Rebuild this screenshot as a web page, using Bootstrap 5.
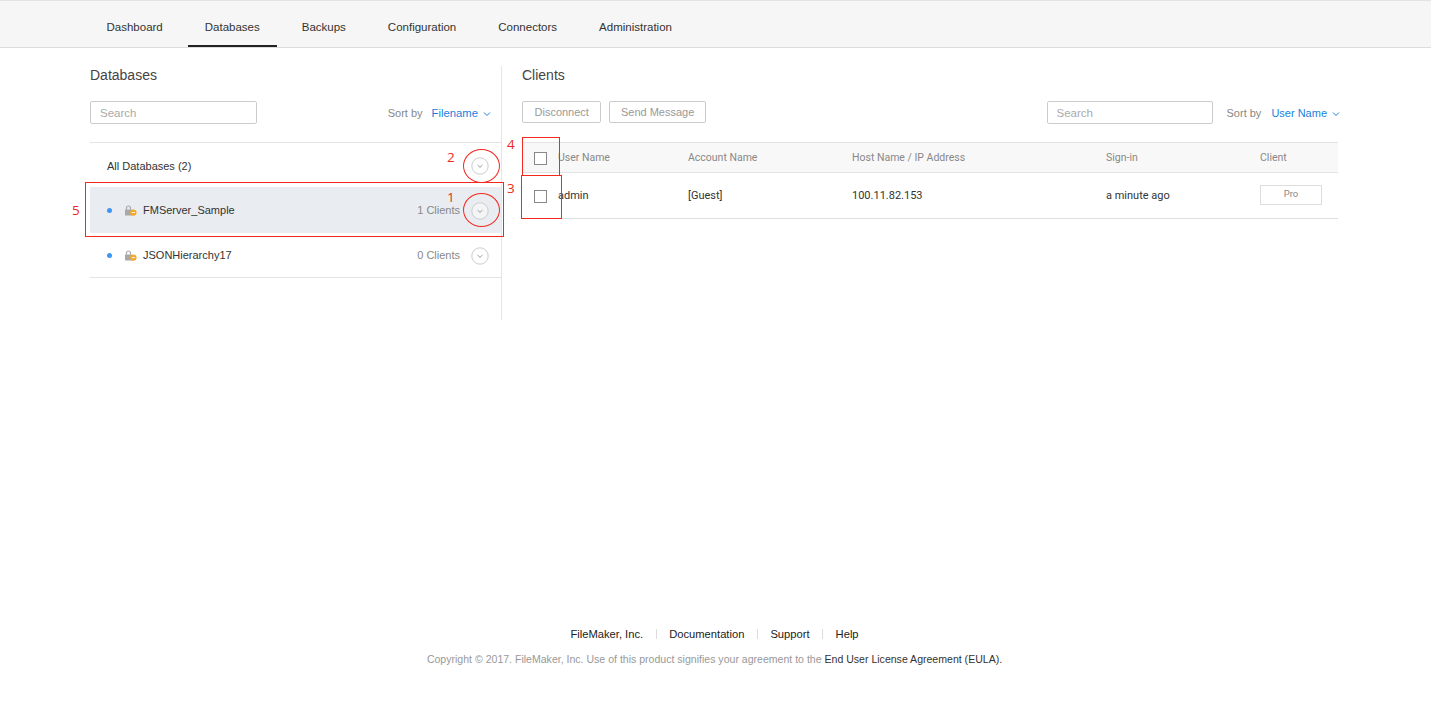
<!DOCTYPE html>
<html lang="en"><head><meta charset="utf-8"><title>Databases</title>
<link href="https://cdn.jsdelivr.net/npm/bootstrap@5.3.0/dist/css/bootstrap.min.css" rel="stylesheet">
<style>
html,body{height:100%}
body{font-family:"Liberation Sans",Arial,sans-serif;font-size:11px;color:#333;background:#fff;position:relative;overflow:hidden}
.topbar{height:48px;background:#f6f6f6;border-top:1px solid #e3e3e3;border-bottom:1px solid #ddd;padding-left:89.5px;gap:8px}
.topbar .nav-link{height:46px;padding:0 17px;color:#333;font-size:11.5px;line-height:53px;position:relative}
.topbar .nav-link.active::after{content:"";position:absolute;left:0;right:0;bottom:0;height:2px;background:#222}
.wrap{padding:18px 93px 0 90px}
.leftcol{width:412px;height:254px;border-right:1px solid #e6e6e6;flex:none}
.rightcol{margin-left:20px;flex:1;min-width:0}
.ttl{font-size:14px;line-height:18px;color:#444;font-weight:400;margin:0}
.sbox{width:167px;height:23px;border:1px solid #ccc;border-radius:2px;font-size:11.5px;padding:2px 9px 0;color:#333;font-family:inherit;background:#fff}
.sbox::placeholder{color:#aaa}
.sortlbl{color:#888;margin-right:9px;margin-top:2px}
.sortval{color:#1a7fdc;text-decoration:none;font-size:11.3px;margin-top:2px}
.chev{width:8px;height:6px;margin-left:5px}
.tools{height:24px;margin-top:16px}
.lefttools{padding-right:10px}
.righttools{margin-right:-2px}
.righttools .sbox{width:166px}
.righttools .sortlbl{margin-left:14px;margin-right:10px}
.righttools .sortval{font-size:11px}
.dbhead{height:45px;margin-top:18px;border-top:1px solid #e3e3e3;padding:2px 12px 0 17px}
.dbrow{height:45px;padding:1px 12px 0 17px;color:#333}
.dbrow.sel{background:#e9edf1;height:46px}
.dbrow.last{border-bottom:1px solid #e3e3e3}
.bdot{width:5px;height:5px;border-radius:50%;background:#3d96f5;margin-right:12px;flex:none}
.lockic{width:13px;height:11px;margin-right:6px;flex:none}
.cnt{color:#888;margin-left:auto;margin-right:11px}
.rbtn{width:18px;height:18px;flex:none}
.act{height:22px;border:1px solid #ccc;border-radius:2px;background:#fff;color:#999;font-size:11px;padding:0 11.5px;margin-right:8px;line-height:20px}
.act.wide{padding:0 10.5px}
.thd{height:31px;margin-top:18px;padding-top:2px;background:#f8f8f8;border-top:1px solid #e3e3e3;border-bottom:1px solid #e3e3e3;color:#888;font-family:Roboto,sans-serif;font-size:10.5px;line-height:1}
.trw{height:46px;padding-top:2px;border-bottom:1px solid #ddd;font-family:Roboto,sans-serif;font-size:11px;color:#333}
.cb{width:13px;height:13px;border:1px solid #888;background:#fff;flex:none;margin:0 11px 0 12px}
.c1{width:130px}.c2{width:164px}.c3{width:254px}.c4{width:154px}
.clnt{width:62px;height:20px;border:1px solid #ddd;color:#888;font-size:9.5px;display:flex;align-items:center;justify-content:center;margin-bottom:4px}
.ftr{position:absolute;left:0;right:0;top:627px;text-align:center;padding-right:2px}
.flinks{color:#222;font-size:11.2px;line-height:14px}
.flinks i{display:inline-block;width:1px;height:10px;background:#ddd;margin:0 12.5px;vertical-align:-1px}
.fcopy{color:#999;font-size:10.55px;line-height:14px;margin-top:11px}
.fcopy span{color:#333}
.note{position:absolute;border:1px solid #f4281f;pointer-events:none}
.circ{border-radius:50%}
.num{position:absolute;color:#ee2a20;font-family:"Open Sans",sans-serif;font-size:13.5px;line-height:16px}
</style></head><body>
<nav class="nav topbar">
<a class="nav-link" href="#">Dashboard</a><a class="nav-link active" href="#">Databases</a><a class="nav-link" href="#">Backups</a><a class="nav-link" href="#">Configuration</a><a class="nav-link" href="#">Connectors</a><a class="nav-link" href="#">Administration</a>
</nav>
<main class="wrap d-flex">
<section class="leftcol">
<h2 class="ttl">Databases</h2>
<div class="tools lefttools d-flex align-items-center">
<input class="sbox" placeholder="Search">
<span class="sortlbl ms-auto">Sort by</span><a class="sortval" href="#">Filename<svg class="chev" viewBox="0 0 8 6"><path d="M1 1.5l3 3 3-3" fill="none" stroke="#1a7fdc"/></svg></a>
</div>
<div class="dbhead d-flex align-items-center"><span>All Databases (2)</span><svg class="rbtn ms-auto" viewBox="0 0 18 18"><circle cx="9" cy="9" r="8.2" fill="#fff" stroke="#ccc"/><path d="M6.5 8l2.5 2.4L11.5 8" fill="none" stroke="#999"/></svg></div>
<div class="dbrow sel d-flex align-items-center"><span class="bdot"></span><svg class="lockic" viewBox="0 0 13 11"><path d="M2.5 4.5V3a2 2 0 0 1 4 0v1.5" fill="none" stroke="#a8a8a8" stroke-width="1.2"/><rect x="1" y="4.5" width="7" height="6" fill="#a8a8a8"/><circle cx="9.3" cy="7.6" r="3.2" fill="#f5a623"/><rect x="7.6" y="7.2" width="3.4" height="0.9" fill="#fff"/></svg><span>FMServer_Sample</span><span class="cnt">1 Clients</span><svg class="rbtn" viewBox="0 0 18 18"><circle cx="9" cy="9" r="8.2" fill="#f3f5f7" stroke="#ccc"/><path d="M6.5 8l2.5 2.4L11.5 8" fill="none" stroke="#999"/></svg></div>
<div class="dbrow last d-flex align-items-center"><span class="bdot"></span><svg class="lockic" viewBox="0 0 13 11"><path d="M2.5 4.5V3a2 2 0 0 1 4 0v1.5" fill="none" stroke="#a8a8a8" stroke-width="1.2"/><rect x="1" y="4.5" width="7" height="6" fill="#a8a8a8"/><circle cx="9.3" cy="7.6" r="3.2" fill="#f5a623"/><rect x="7.6" y="7.2" width="3.4" height="0.9" fill="#fff"/></svg><span>JSONHierarchy17</span><span class="cnt">0 Clients</span><svg class="rbtn" viewBox="0 0 18 18"><circle cx="9" cy="9" r="8.2" fill="#fff" stroke="#ccc"/><path d="M6.5 8l2.5 2.4L11.5 8" fill="none" stroke="#999"/></svg></div>
</section>
<section class="rightcol">
<h2 class="ttl">Clients</h2>
<div class="tools righttools d-flex align-items-center">
<button class="act">Disconnect</button><button class="act wide">Send Message</button>
<input class="sbox ms-auto" placeholder="Search">
<span class="sortlbl">Sort by</span><a class="sortval" href="#">User Name<svg class="chev" viewBox="0 0 8 6"><path d="M1 1.5l3 3 3-3" fill="none" stroke="#1a7fdc"/></svg></a>
</div>
<div class="thd d-flex align-items-center"><span class="cb"></span><span class="c1">User Name</span><span class="c2">Account Name</span><span class="c3">Host Name / IP Address</span><span class="c4">Sign-in</span><span>Client</span></div>
<div class="trw d-flex align-items-center"><span class="cb"></span><span class="c1">admin</span><span class="c2">[Guest]</span><span class="c3">100.11.82.153</span><span class="c4">a minute ago</span><span class="clnt">Pro</span></div>
</section>
</main>
<footer class="ftr">
<div class="flinks">FileMaker, Inc.<i></i>Documentation<i></i>Support<i></i>Help</div>
<div class="fcopy">Copyright © 2017. FileMaker, Inc. Use of this product signifies your agreement to the <span>End User License Agreement (EULA).</span></div>
</footer>
<div class="note" style="left:85px;top:182px;width:419px;height:55px"></div>
<div class="note circ" style="left:463px;top:149px;width:37px;height:34px"></div>
<div class="note circ" style="left:463px;top:193px;width:37px;height:34px"></div>
<div class="note" style="left:522px;top:137px;width:38px;height:39px"></div>
<div class="note" style="left:521px;top:175px;width:41px;height:44px"></div>
<span class="num" style="left:447px;top:149px">2</span>
<span class="num" style="left:447px;top:189px">1</span>
<span class="num" style="left:507px;top:136px">4</span>
<span class="num" style="left:507px;top:180px">3</span>
<span class="num" style="left:72px;top:202px">5</span>
<script src="https://cdn.jsdelivr.net/npm/bootstrap@5.3.0/dist/js/bootstrap.bundle.min.js"></script>
</body></html>
